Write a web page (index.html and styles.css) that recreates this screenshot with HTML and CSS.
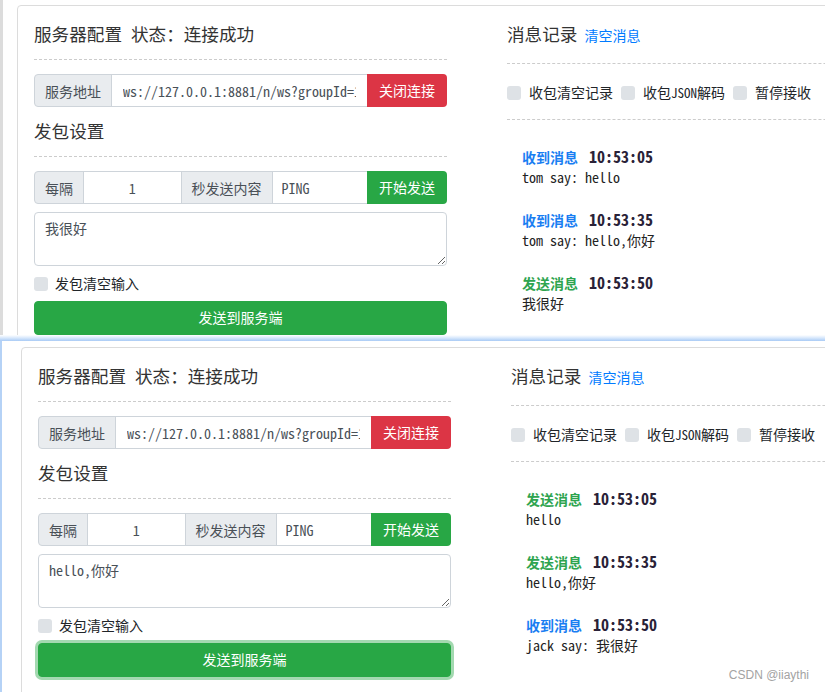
FILE: index.html
```html
<!DOCTYPE html>
<html lang="zh-CN">
<head>
<meta charset="utf-8">
<title>WebSocket 调试</title>
<link rel="stylesheet" href="styles.css">
</head>
<body>
<div class="shot shot-a">
  <div class="card">
    <div class="col left">
      <h2 class="title">服务器配置<span class="status">状态：连接成功</span></h2>
      <div class="igroup">
        <span class="addon">服务地址</span>
        <input class="field url" value="ws://127.0.0.1:8881/n/ws?groupId=1">
        <button class="btn danger">关闭连接</button>
      </div>
      <h2 class="title sub">发包设置</h2>
      <div class="igroup">
        <span class="addon">每隔</span>
        <input class="field num" value="1">
        <span class="addon">秒发送内容</span>
        <input class="field ping" value="PING">
        <button class="btn success">开始发送</button>
      </div>
      <textarea class="msg">我很好</textarea>
      <label class="check"><span class="box"></span><span>发包清空输入</span></label>
      <button class="btn success block">发送到服务端</button>
    </div>
    <div class="col right">
      <h2 class="title">消息记录<a class="link">清空消息</a></h2>
      <div class="checks">
        <label class="check"><span class="box"></span><span>收包清空记录</span></label>
        <label class="check"><span class="box"></span><span>收包<span class="mono">JSON</span>解码</span></label>
        <label class="check"><span class="box"></span><span>暂停接收</span></label>
      </div>
      <div class="log">
        <div class="entry"><div class="head"><span class="kind recv">收到消息</span><span class="time">10:53:05</span></div><div class="body">tom say: hello</div></div>
        <div class="entry"><div class="head"><span class="kind recv">收到消息</span><span class="time">10:53:35</span></div><div class="body">tom say: hello,你好</div></div>
        <div class="entry"><div class="head"><span class="kind send">发送消息</span><span class="time">10:53:50</span></div><div class="body">我很好</div></div>
      </div>
    </div>
  </div>
</div>
<div class="glow"></div>
<div class="shot shot-b">
  <div class="card">
    <div class="col left">
      <h2 class="title">服务器配置<span class="status">状态：连接成功</span></h2>
      <div class="igroup">
        <span class="addon">服务地址</span>
        <input class="field url" value="ws://127.0.0.1:8881/n/ws?groupId=1">
        <button class="btn danger">关闭连接</button>
      </div>
      <h2 class="title sub">发包设置</h2>
      <div class="igroup">
        <span class="addon">每隔</span>
        <input class="field num" value="1">
        <span class="addon">秒发送内容</span>
        <input class="field ping" value="PING">
        <button class="btn success">开始发送</button>
      </div>
      <textarea class="msg">hello,你好</textarea>
      <label class="check"><span class="box"></span><span>发包清空输入</span></label>
      <button class="btn success block focused">发送到服务端</button>
    </div>
    <div class="col right">
      <h2 class="title">消息记录<a class="link">清空消息</a></h2>
      <div class="checks">
        <label class="check"><span class="box"></span><span>收包清空记录</span></label>
        <label class="check"><span class="box"></span><span>收包<span class="mono">JSON</span>解码</span></label>
        <label class="check"><span class="box"></span><span>暂停接收</span></label>
      </div>
      <div class="log">
        <div class="entry"><div class="head"><span class="kind send">发送消息</span><span class="time">10:53:05</span></div><div class="body">hello</div></div>
        <div class="entry"><div class="head"><span class="kind send">发送消息</span><span class="time">10:53:35</span></div><div class="body">hello,你好</div></div>
        <div class="entry"><div class="head"><span class="kind recv">收到消息</span><span class="time">10:53:50</span></div><div class="body">jack say: 我很好</div></div>
      </div>
    </div>
  </div>
  <div class="watermark">CSDN @iiaythi</div>
</div>
</body>
</html>
```

FILE: styles.css
```css
html, body {
  margin: 0;
  padding: 0;
  overflow: hidden;
  background: #fff;
}
body {
  width: 825px;
  height: 692px;
  font-family: "Noto Sans CJK SC", "Microsoft YaHei", sans-serif;
  font-size: 14px;
  color: #212529;
}
.shot {
  position: relative;
  overflow: hidden;
  background: #fff;
  box-sizing: border-box;
}
.shot-a {
  height: 335px;
  padding: 5px 0 0 17px;
  box-shadow: inset 3px 0 0 #dcdcdc;
}
.glow {
  height: 6px;
  background: linear-gradient(#ffffff, #d6e7fc 50%, #a9cbf5);
}
.shot-b {
  height: 351px;
  padding: 6px 0 0 21px;
  box-shadow: inset 2px 0 0 #b5d2f6;
}
.card {
  display: flex;
  gap: 60px;
  width: 940px;
  border: 1px solid #dcdcdc;
  border-radius: 4px;
  padding: 17px 0 40px 16px;
}
.col.left { width: 413px; flex: none; }
.col.right { width: 430px; flex: none; }

.title {
  margin: 0;
  font-size: 17.6px;
  line-height: 21px;
  font-weight: 400;
  color: #333;
  padding-bottom: 15px;
  border-bottom: 1px dashed #cccccc;
}
.title .status { margin-left: 9px; }
.title.sub { margin-top: 13px; padding-bottom: 15px; }
.right .title { padding-bottom: 17px; }
.link {
  font-size: 14px;
  color: #007bff;
  margin-left: 7px;
  text-decoration: none;
}

.igroup {
  display: flex;
  height: 33px;
  margin-top: 14px;
}
.igroup > * {
  box-sizing: border-box;
  height: 33px;
  margin: 0;
  border: 1px solid #ced4da;
  font-size: 14px;
  padding-bottom: 2px;
}
.igroup > * + * { margin-left: -1px; }
.igroup > :first-child { border-radius: 4px 0 0 4px; }
.igroup > :last-child { border-radius: 0 4px 4px 0; }
.addon {
  display: flex;
  align-items: center;
  padding: 0 10px;
  background: #e9ecef;
  color: #495057;
  white-space: nowrap;
}
.field {
  flex: 1;
  min-width: 0;
  padding: 0 11px;
  font-family: "Noto Sans Mono CJK SC", "Liberation Mono", monospace;
  color: #495057;
  background: #fff;
  outline: none;
}
.field.num { text-align: center; }
.field.ping { padding-left: 9px; }
.btn {
  padding: 0 11px;
  color: #fff;
  font-family: "Noto Sans CJK SC", sans-serif;
  font-size: 14px;
  cursor: pointer;
}
.igroup > .btn { border-color: transparent; padding-bottom: 2px; }
.danger { background: #dc3545; }
.success { background: #28a745; }

.msg {
  display: block;
  box-sizing: border-box;
  width: 100%;
  height: 54px;
  margin: 8px 0 0;
  padding: 5px 10px;
  border: 1px solid #ced4da;
  border-radius: 4px;
  font-family: "Noto Sans Mono CJK SC", "Liberation Mono", monospace;
  font-size: 14px;
  line-height: 20px;
  color: #495057;
  resize: vertical;
  outline: none;
}
.check {
  display: flex;
  align-items: center;
  gap: 7px;
  height: 20px;
  margin-top: 8px;
  font-size: 14px;
  line-height: 20px;
  color: #212529;
  white-space: nowrap;
}
.check > span:last-child { position: relative; top: -1px; }
.box {
  width: 14px;
  height: 14px;
  flex: none;
  border-radius: 3px;
  background: #dee2e6;
}
.mono { font-family: "Noto Sans Mono CJK SC", "Liberation Mono", monospace; font-size: 13px; }
.btn.block {
  display: block;
  width: 100%;
  height: 34px;
  margin-top: 7px;
  padding-bottom: 2px;
  border: 1px solid #28a745;
  border-radius: 4px;
}
.btn.focused { box-shadow: 0 0 0 3px rgba(72, 180, 97, 0.5); }

.checks {
  display: flex;
  align-items: center;
  height: 20px;
  padding: 19px 0 16px;
  border-bottom: 1px dashed #cccccc;
}
.checks .check { margin: 0 8px 0 0; gap: 8px; }

.log { padding: 26px 0 0 15px; }
.entry { margin-bottom: 21px; }
.head { height: 21px; line-height: 21px; white-space: nowrap; }
.kind { font-weight: 700; font-size: 14px; }
.recv { color: #1a7ef2; }
.send { color: #2ea44f; }
.time {
  margin-left: 11px;
  font-family: "Noto Sans Mono CJK SC", "DejaVu Sans Mono", monospace;
  font-weight: 700;
  font-size: 16px;
  color: #2a2238;
}
.body {
  font-family: "Noto Sans Mono CJK SC", "Liberation Mono", monospace;
  font-size: 14px;
  line-height: 21px;
  color: #222;
  white-space: nowrap;
}
.watermark {
  position: absolute;
  right: 16px;
  bottom: 10px;
  font-family: "Liberation Sans", Arial, sans-serif;
  font-size: 12px;
  line-height: 14px;
  color: #a3a3a3;
}
```
